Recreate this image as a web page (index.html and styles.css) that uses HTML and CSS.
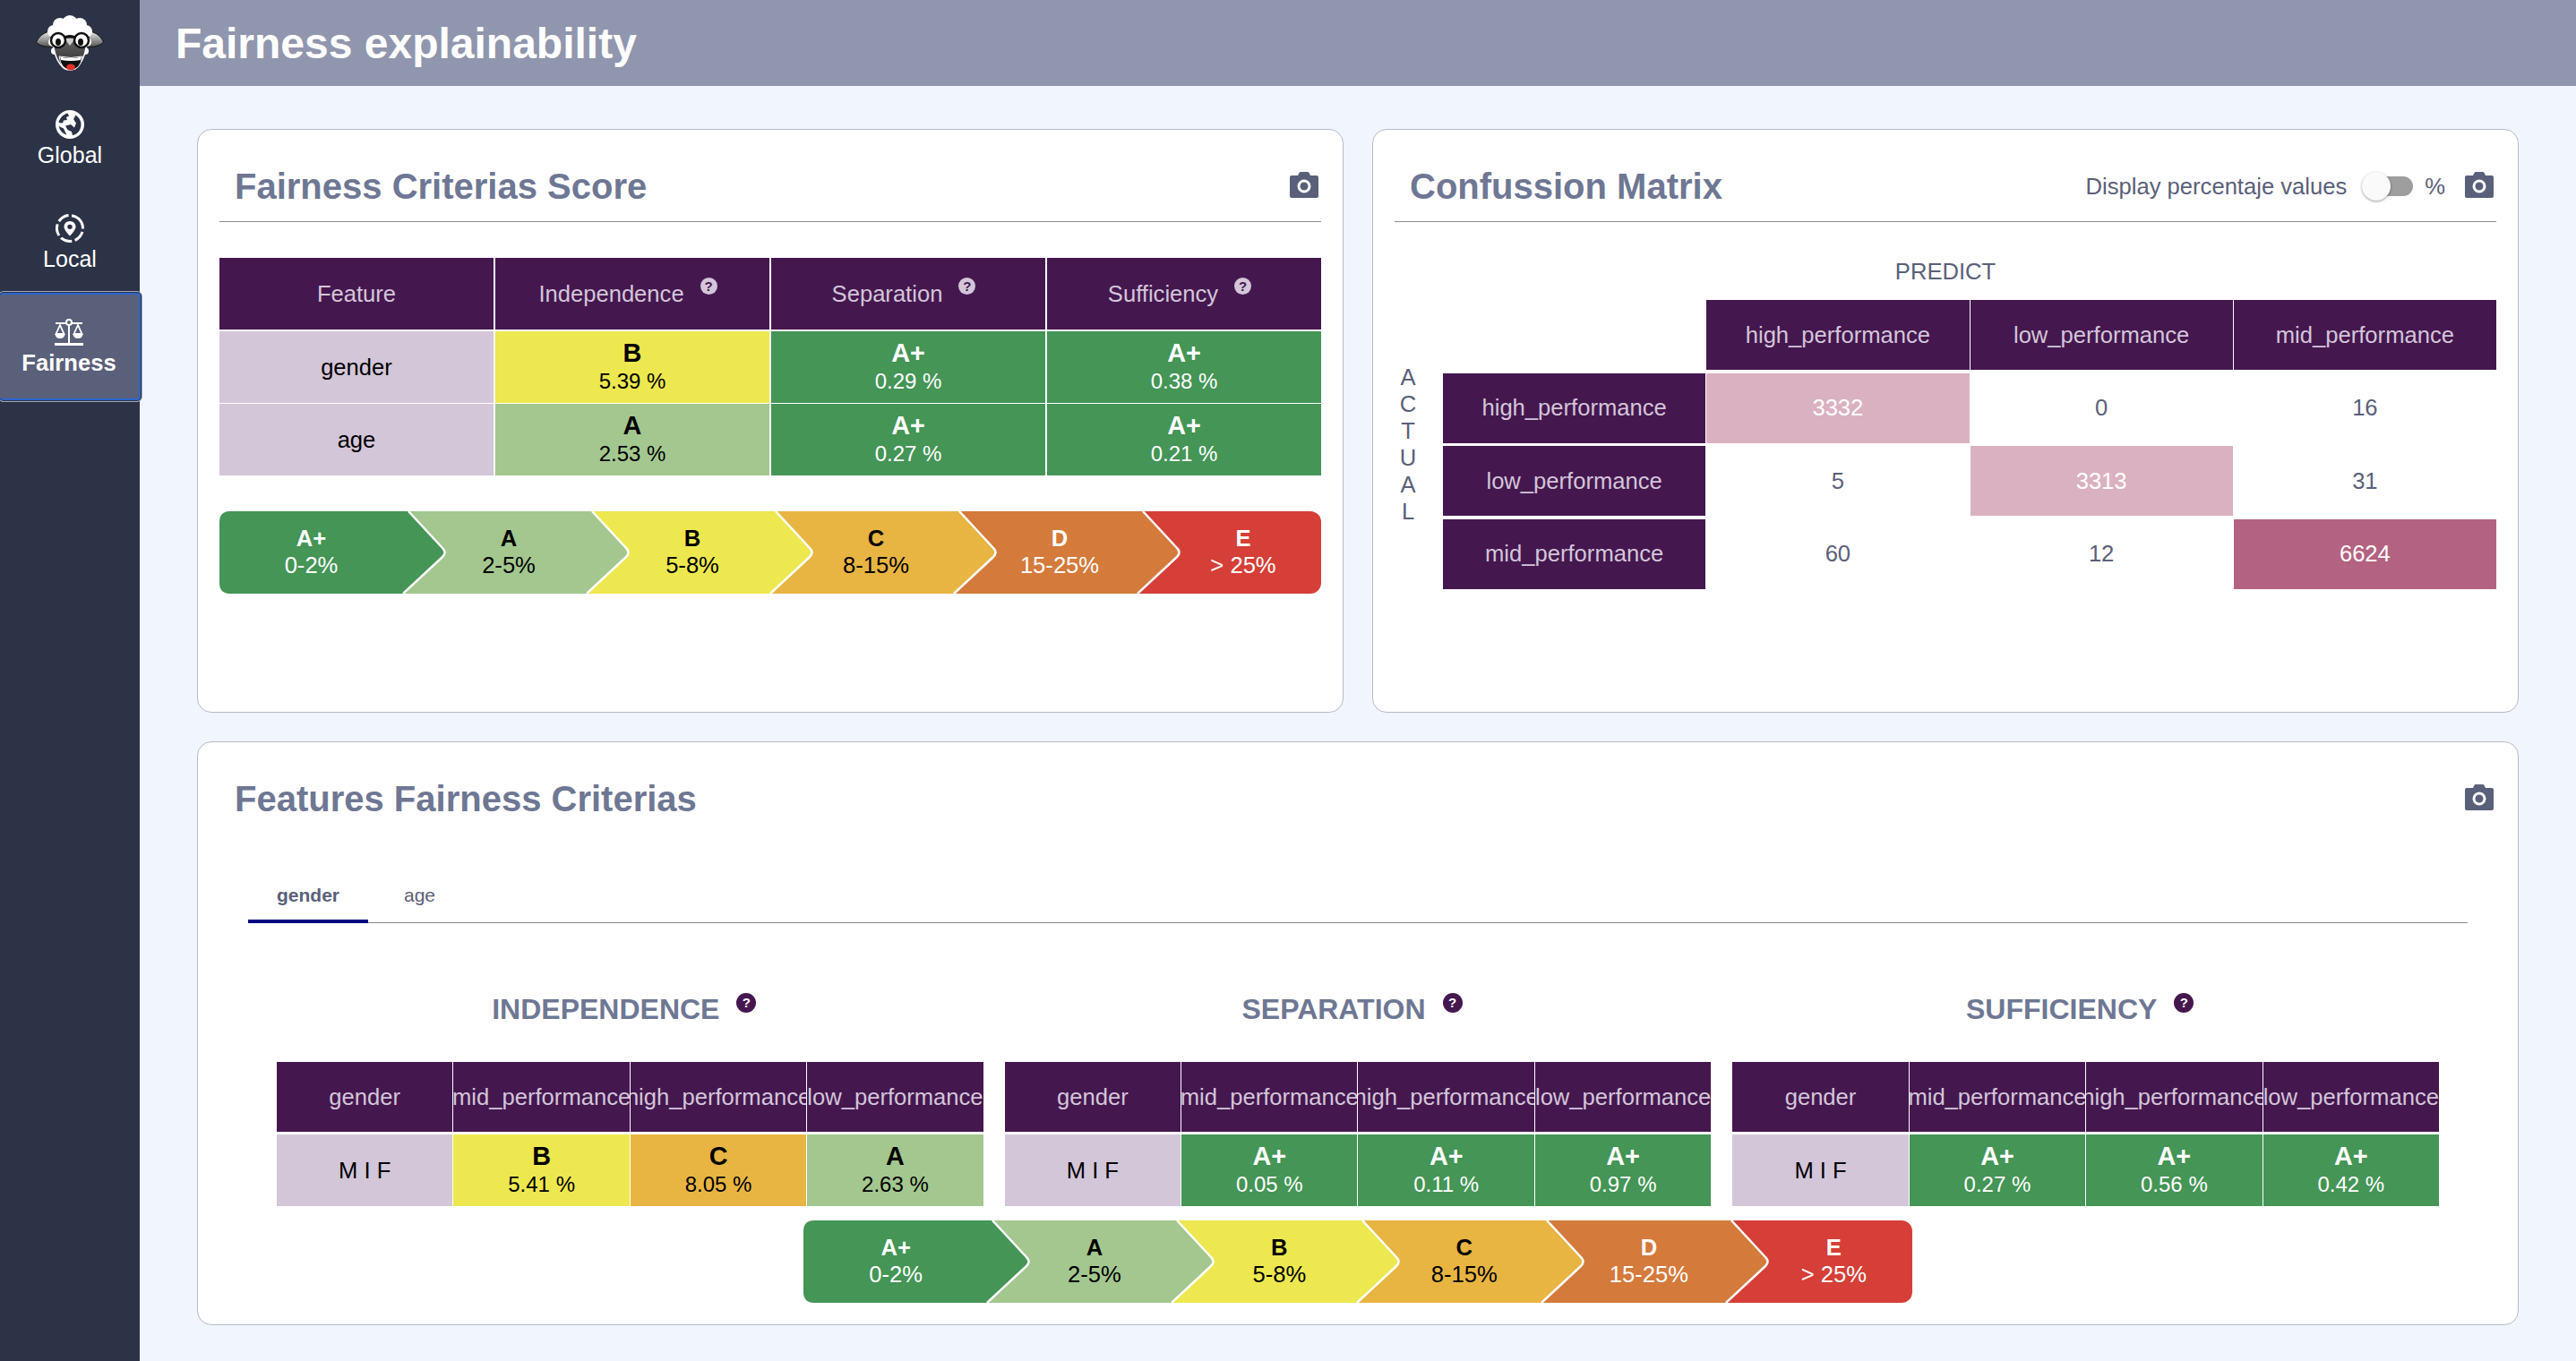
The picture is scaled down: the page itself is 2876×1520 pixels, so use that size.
FILE: index.html
```html
<!DOCTYPE html>
<html lang="en">
<head>
<meta charset="utf-8">
<title>Fairness explainability</title>
<link rel="stylesheet" href="styles.css">
</head>
<body>
<svg class="defs" width="0" height="0" aria-hidden="true">
  <defs>
    <symbol id="chev-first" viewBox="0 0 260 92">
      <path fill="currentColor" d="M12 0H211L249 41Q254 46 249 51L205 92H12Q0 92 0 80V12Q0 0 12 0Z"/>
      <path fill="none" stroke="#fff" stroke-width="2.5" d="M211 0L249 41Q254 46 249 51L205 92"/>
    </symbol>
    <symbol id="chev" viewBox="0 0 260 92">
      <path fill="currentColor" d="M0 0H211L249 41Q254 46 249 51L205 92H0Z"/>
      <path fill="none" stroke="#fff" stroke-width="2.5" d="M211 0L249 41Q254 46 249 51L205 92"/>
    </symbol>
    <symbol id="camera" viewBox="0 0 32 29">
      <path fill="currentColor" d="M2 4H9L10.500 1Q11 0 12 0H20Q21 0 21.500 1L23 4H30Q32 4 32 6V27Q32 29 30 29H2Q0 29 0 27V6Q0 4 2 4Z"/>
      <circle cx="16" cy="16" r="6" fill="none" stroke="#fff" stroke-width="3"/>
    </symbol>
  </defs>
</svg>

<aside class="sidebar">
  <div class="logo">
    <svg width="76" height="62" viewBox="0 0 76 62" aria-label="logo">
      <defs>
        <linearGradient id="ear" x1="0" y1="0" x2="0" y2="1">
          <stop offset="0" stop-color="#e8e8e8"/><stop offset="1" stop-color="#555"/>
        </linearGradient>
        <linearGradient id="face" x1="0" y1="0" x2="0" y2="1">
          <stop offset="0" stop-color="#666"/><stop offset="1" stop-color="#2f2f2f"/>
        </linearGradient>
      </defs>
      <path fill="url(#ear)" stroke="#111" stroke-width="1" d="M16 18C9 19 3 24 .5 30C4 34 11 36 18 35Z"/>
      <path fill="url(#ear)" stroke="#111" stroke-width="1" d="M60 18C67 19 73 24 75.500 30C72 34 65 36 58 35Z"/>
      <g fill="#fff">
        <circle cx="38" cy="9" r="9"/><circle cx="27" cy="11" r="8"/><circle cx="49" cy="11" r="8"/>
        <circle cx="20" cy="18" r="7"/><circle cx="56" cy="18" r="7"/><circle cx="38" cy="22" r="19"/>
        <circle cx="19" cy="30" r="5"/><circle cx="57" cy="30" r="5"/><circle cx="21" cy="40" r="4"/><circle cx="55" cy="40" r="4"/>
      </g>
      <path fill="url(#face)" stroke="#fff" stroke-width="1.500" d="M20 22H56C58 36 54 50 46 58C42 62 34 62 30 58C22 50 18 36 20 22Z"/>
      <path fill="#cfcfcf" d="M32 26H44L38 34Z"/>
      <path fill="none" stroke="#111" stroke-width="3" d="M32 25Q38 22 44 25"/>
      <circle cx="25" cy="28" r="8" fill="#fff" stroke="#111" stroke-width="2.500"/>
      <circle cx="51" cy="28" r="8" fill="#fff" stroke="#111" stroke-width="2.500"/>
      <ellipse cx="25" cy="30" rx="3" ry="4" fill="#111"/>
      <ellipse cx="50" cy="30" rx="3" ry="4" fill="#111"/>
      <path fill="#111" stroke="#fff" stroke-width="1" d="M26 46Q39 49 52 46Q50 61 39 61Q28 61 26 46Z"/>
      <path fill="#fff" d="M27 46.500Q39 49.500 51 46.500L50 50Q39 52 28 50Z"/>
      <ellipse cx="39" cy="58" rx="5" ry="3.500" fill="#e2302a"/>
    </svg>
  </div>
  <nav class="nav">
    <a class="nav-item">
      <svg class="nav-icon" width="32" height="32" viewBox="0 0 32 32">
        <circle cx="16" cy="16" r="16" fill="#fff"/>
        <path fill="#2c3347" d="M3.500 14C4.500 9 8.500 4.800 13.500 3.500L15 6.500L12 8L13 11L9 11.500L8 14.500Z"/>
        <path fill="#2c3347" d="M11 17.500L17 16L21 19.500L23 14.500L20 10L22.500 5.500C26.500 8 28.500 12 28.500 16C28.500 22 24.500 27 19 28.200L18 24L13.500 22Z"/>
        <path fill="#2c3347" d="M3.700 18L9 20.500L12.500 27.700C8 26.300 4.500 22.700 3.700 18Z"/>
      </svg>
      <span>Global</span>
    </a>
    <a class="nav-item">
      <svg class="nav-icon" width="32" height="32" viewBox="0 0 32 32">
        <circle cx="16" cy="16" r="14.500" fill="none" stroke="#fff" stroke-width="3" stroke-dasharray="13 3.500" transform="rotate(-50 16 16)"/>
        <path fill="#fff" fill-rule="evenodd" d="M16 8C12.300 8 9.500 10.800 9.500 14.300C9.500 17.500 14 22.500 16 24.500C18 22.500 22.500 17.500 22.500 14.300C22.500 10.800 19.700 8 16 8ZM16 11.700A2.700 2.700 0 1 1 16 17.100A2.700 2.700 0 1 1 16 11.700Z"/>
      </svg>
      <span>Local</span>
    </a>
    <a class="nav-item is-active">
      <svg class="nav-icon" width="32" height="30" viewBox="0 0 32 30">
        <rect x="0" y="27" width="32" height="3" fill="#fff"/>
        <rect x="15" y="4" width="2" height="24" fill="#fff"/>
        <rect x="1" y="4" width="30" height="2" fill="#fff"/>
        <circle cx="16" cy="4" r="3" fill="#5a6079" stroke="#fff" stroke-width="2"/>
        <path fill="none" stroke="#fff" stroke-width="1.800" d="M6 7L1.500 17H10.500ZM26 7L21.500 17H30.500Z"/>
        <path fill="#fff" d="M.5 17H11.500Q11 22 6 22Q1 22 .5 17ZM20.500 17H31.500Q31 22 26 22Q21 22 20.500 17Z"/>
      </svg>
      <span>Fairness</span>
    </a>
  </nav>
</aside>

<div class="main">
  <header class="topbar"><h1>Fairness explainability</h1></header>
  <div class="content">

    <section class="card">
      <div class="card-head ruled">
        <h2>Fairness Criterias Score</h2>
        <svg class="camera" width="32" height="29"><use href="#camera"/></svg>
      </div>
      <div class="score-grid">
        <div class="cell head">Feature</div>
        <div class="cell head">Independence<span class="help">?</span></div>
        <div class="cell head">Separation<span class="help">?</span></div>
        <div class="cell head">Sufficiency<span class="help">?</span></div>
        <div class="cell feat">gender</div>
        <div class="cell g-b"><b>B</b><span>5.39 %</span></div>
        <div class="cell g-ap"><b>A+</b><span>0.29 %</span></div>
        <div class="cell g-ap"><b>A+</b><span>0.38 %</span></div>
        <div class="cell feat">age</div>
        <div class="cell g-a"><b>A</b><span>2.53 %</span></div>
        <div class="cell g-ap"><b>A+</b><span>0.27 %</span></div>
        <div class="cell g-ap"><b>A+</b><span>0.21 %</span></div>
      </div>
      <div class="legend">
        <div class="seg g-ap"><svg class="chev"><use href="#chev-first"/></svg><div class="seg-label"><b>A+</b><span>0-2%</span></div></div>
        <div class="seg g-a"><svg class="chev"><use href="#chev"/></svg><div class="seg-label"><b>A</b><span>2-5%</span></div></div>
        <div class="seg g-b"><svg class="chev"><use href="#chev"/></svg><div class="seg-label"><b>B</b><span>5-8%</span></div></div>
        <div class="seg g-c"><svg class="chev"><use href="#chev"/></svg><div class="seg-label"><b>C</b><span>8-15%</span></div></div>
        <div class="seg g-d"><svg class="chev"><use href="#chev"/></svg><div class="seg-label"><b>D</b><span>15-25%</span></div></div>
        <div class="seg seg-last g-e"><div class="seg-label"><b>E</b><span>&gt; 25%</span></div></div>
      </div>
    </section>

    <section class="card">
      <div class="card-head ruled">
        <h2>Confussion Matrix</h2>
        <div class="head-tools">
          <span>Display percentaje values</span>
          <span class="toggle"><span class="toggle-thumb"></span></span>
          <span class="toggle-unit">%</span>
          <svg class="camera" width="32" height="29"><use href="#camera"/></svg>
        </div>
      </div>
      <div class="predict">PREDICT</div>
      <div class="matrix-wrap">
        <div class="actual">ACTUAL</div>
        <div class="matrix">
          <div class="blank"></div>
          <div class="cell head">high_performance</div>
          <div class="cell head">low_performance</div>
          <div class="cell head">mid_performance</div>
          <div class="cell head">high_performance</div>
          <div class="cell m-mid">3332</div>
          <div class="cell m-none">0</div>
          <div class="cell m-none">16</div>
          <div class="cell head">low_performance</div>
          <div class="cell m-none">5</div>
          <div class="cell m-mid">3313</div>
          <div class="cell m-none">31</div>
          <div class="cell head">mid_performance</div>
          <div class="cell m-none">60</div>
          <div class="cell m-none">12</div>
          <div class="cell m-high">6624</div>
        </div>
      </div>
    </section>

    <section class="card card-wide">
      <div class="card-head">
        <h2>Features Fairness Criterias</h2>
        <svg class="camera" width="32" height="29"><use href="#camera"/></svg>
      </div>
      <div class="tabs">
        <span class="tab is-active">gender</span>
        <span class="tab">age</span>
      </div>
      <div class="criteria">
        <div class="criterion">
          <h3>INDEPENDENCE<span class="help help-dark">?</span></h3>
          <div class="crit-grid">
            <div class="cell head">gender</div>
            <div class="cell head">mid_performance</div>
            <div class="cell head">high_performance</div>
            <div class="cell head">low_performance</div>
            <div class="cell feat">M I F</div>
            <div class="cell g-b"><b>B</b><span>5.41 %</span></div>
            <div class="cell g-c"><b>C</b><span>8.05 %</span></div>
            <div class="cell g-a"><b>A</b><span>2.63 %</span></div>
          </div>
        </div>
        <div class="criterion">
          <h3>SEPARATION<span class="help help-dark">?</span></h3>
          <div class="crit-grid">
            <div class="cell head">gender</div>
            <div class="cell head">mid_performance</div>
            <div class="cell head">high_performance</div>
            <div class="cell head">low_performance</div>
            <div class="cell feat">M I F</div>
            <div class="cell g-ap"><b>A+</b><span>0.05 %</span></div>
            <div class="cell g-ap"><b>A+</b><span>0.11 %</span></div>
            <div class="cell g-ap"><b>A+</b><span>0.97 %</span></div>
          </div>
        </div>
        <div class="criterion">
          <h3>SUFFICIENCY<span class="help help-dark">?</span></h3>
          <div class="crit-grid">
            <div class="cell head">gender</div>
            <div class="cell head">mid_performance</div>
            <div class="cell head">high_performance</div>
            <div class="cell head">low_performance</div>
            <div class="cell feat">M I F</div>
            <div class="cell g-ap"><b>A+</b><span>0.27 %</span></div>
            <div class="cell g-ap"><b>A+</b><span>0.56 %</span></div>
            <div class="cell g-ap"><b>A+</b><span>0.42 %</span></div>
          </div>
        </div>
      </div>
      <div class="legend legend-wide">
        <div class="seg g-ap"><svg class="chev"><use href="#chev-first"/></svg><div class="seg-label"><b>A+</b><span>0-2%</span></div></div>
        <div class="seg g-a"><svg class="chev"><use href="#chev"/></svg><div class="seg-label"><b>A</b><span>2-5%</span></div></div>
        <div class="seg g-b"><svg class="chev"><use href="#chev"/></svg><div class="seg-label"><b>B</b><span>5-8%</span></div></div>
        <div class="seg g-c"><svg class="chev"><use href="#chev"/></svg><div class="seg-label"><b>C</b><span>8-15%</span></div></div>
        <div class="seg g-d"><svg class="chev"><use href="#chev"/></svg><div class="seg-label"><b>D</b><span>15-25%</span></div></div>
        <div class="seg seg-last g-e"><div class="seg-label"><b>E</b><span>&gt; 25%</span></div></div>
      </div>
    </section>

  </div>
</div>
</body>
</html>
```

FILE: styles.css
```css
* { box-sizing: border-box; }

html, body { height: 100%; }

body {
  margin: 0;
  display: flex;
  min-height: 1520px;
  overflow: hidden;
  background: #f1f5fe;
  color: #5a6079;
  font-family: "Liberation Sans", Arial, sans-serif;
  font-size: 25.6px;
}

.defs { position: absolute; }

/* sidebar */
.sidebar {
  flex: 0 0 156px;
  width: 156px;
  min-width: 0;
  background: #2c3347;
  position: relative;
  z-index: 2;
}

.logo {
  height: 96px;
  padding-top: 17px;
  display: flex;
  justify-content: center;
}

.nav { display: flex; flex-direction: column; align-items: flex-start; padding-top: 27px; }

.nav-item {
  width: 156px;
  height: 102px;
  display: flex;
  flex-direction: column;
  align-items: center;
  color: #fff;
  font-size: 25px;
  line-height: 30px;
  margin-bottom: 14px;
}

.nav-icon { flex: none; margin-bottom: 3px; }

.nav-item.is-active {
  width: 157px;
  height: 120px;
  margin-top: -28px;
  padding: 27px 1px 0 0;
  background: #5a6079;
  border: 2px solid #2a65d0;
  border-left: 0;
  border-radius: 4px;
  box-shadow: 0 0 0 1px #2c3347, 0 0 0 2px #a4a8b6;
  font-weight: 700;
  font-size: 25.6px;
}

.nav-item.is-active .nav-icon { margin-bottom: 4px; }

/* main */
.main { flex: 1; min-width: 0; display: flex; flex-direction: column; }

.topbar {
  height: 96px;
  flex: none;
  background: #9096ad;
  display: flex;
  align-items: center;
  padding-left: 40px;
}

.topbar h1 { margin: 0; color: #fff; font-size: 48px; font-weight: 700; }

.content {
  padding: 48px 64px 0;
  display: grid;
  grid-template-columns: 1fr 1fr;
  grid-template-rows: 652px 652px;
  gap: 32px;
}

.card {
  background: #fff;
  border: 1px solid #b5bac6;
  border-radius: 16px;
  padding: 24px;
  min-width: 0;
}

.card-wide { grid-column: 1 / -1; }

.card-head {
  height: 78px;
  display: flex;
  align-items: center;
  justify-content: space-between;
  padding: 0 3px 0 17px;
}

.card-head.ruled { height: 79px; border-bottom: 1px solid #8e8e8e; }

.card-head h2 {
  margin: 0;
  font-size: 40px;
  font-weight: 700;
  color: #6e7793;
}

.camera { flex: none; margin-bottom: 4px; color: #5a6079; }

.head-tools { display: flex; align-items: center; }

/* toggle */
.toggle {
  position: relative;
  width: 50px;
  height: 22px;
  margin: 0 13px 0 24px;
  background: #9e9e9e;
  border-radius: 11px;
}

.toggle-thumb {
  position: absolute;
  left: -7px;
  top: -5px;
  width: 32px;
  height: 32px;
  border-radius: 50%;
  background: #fafafa;
  box-shadow: 0 1px 3px rgba(0, 0, 0, .4);
}

.toggle-unit { margin-right: 22px; }

/* table cells */
.cell {
  display: flex;
  flex-direction: column;
  align-items: center;
  justify-content: center;
  overflow: hidden;
  white-space: nowrap;
  line-height: 31px;
  text-align: center;
  color: #000;
}

.cell b { font-size: 28.8px; }
.cell span { font-size: 24px; }

.cell.head {
  flex-direction: row;
  background: #45174f;
  color: #d3c6d9;
}

.cell.feat { background: #d3c6d9; }

.g-ap { background: #449556; }
.g-a { background: #a3c78f; }
.g-b { background: #ede84f; }
.g-c { background: #e8b542; }
.g-d { background: #d47a3b; }
.g-e { background: #d53f37; }

.cell.g-ap, .seg.g-ap, .seg.g-d, .seg.g-e { color: #fff; }

.help {
  flex: none;
  width: 19px;
  height: 19px;
  margin: -18px 10px 0 18px;
  border-radius: 50%;
  background: #d3c6d9;
  color: #45174f;
  font-size: 15px !important;
  font-weight: 700;
  line-height: 19px;
  text-align: center;
}

.help-dark {
  display: inline-block;
  vertical-align: top;
  width: 22px;
  height: 22px;
  margin: 0 0 0 19px;
  background: #45174f;
  color: #fff;
  line-height: 22px;
}

.score-grid {
  margin-top: 40px;
  display: grid;
  grid-template-columns: repeat(4, 1fr);
  grid-template-rows: 81px 80px 80px;
  column-gap: 2px;
  row-gap: 1px;
}

.score-grid .head { margin-bottom: 1px; }

/* legend */
.legend { margin-top: 40px; height: 92px; display: flex; }

.seg {
  position: relative;
  flex: 1 1 0;
  min-width: 0;
  height: 92px;
  color: #000;
  background: none;
}

.seg:nth-child(1) { z-index: 6; }
.seg:nth-child(2) { z-index: 5; }
.seg:nth-child(3) { z-index: 4; }
.seg:nth-child(4) { z-index: 3; }
.seg:nth-child(5) { z-index: 2; }
.seg:nth-child(6) { z-index: 1; }

.chev {
  position: absolute;
  left: 0;
  top: 0;
  width: 260px;
  height: 92px;
}

.seg.g-ap .chev { color: #449556; }
.seg.g-a .chev { color: #a3c78f; }
.seg.g-b .chev { color: #ede84f; }
.seg.g-c .chev { color: #e8b542; }
.seg.g-d .chev { color: #d47a3b; }

.seg-last { background: #d53f37; border-radius: 0 12px 12px 0; }

.seg-label {
  position: relative;
  height: 92px;
  display: flex;
  flex-direction: column;
  align-items: center;
  justify-content: center;
  line-height: 30px;
  padding-bottom: 2px;
  white-space: nowrap;
}

.seg:not(:first-child) .seg-label { margin-left: 31px; }

/* matrix */
.predict {
  margin-top: 40px;
  height: 47px;
  text-align: center;
  line-height: 30px;
}

.matrix-wrap { display: flex; align-items: center; }

.actual {
  width: 20px;
  margin: 0 29px 0 5px;
  line-height: 30px;
  text-align: center;
  word-break: break-all;
}

.matrix {
  flex: 1;
  min-width: 0;
  display: grid;
  grid-template-columns: repeat(4, 1fr);
  grid-auto-rows: 78px;
  column-gap: 1px;
  row-gap: 3.67px;
}

.m-none { background: #fff; color: #5a6079; }
.m-mid { background: #dab1c0; color: #fff; }
.m-high { background: #b46281; color: #fff; }

/* tabs */
.tabs {
  margin: 47px 32px 0;
  height: 53px;
  display: flex;
  border-bottom: 1px solid #888;
  font-size: 21px;
  line-height: 44px;
}

.tab { padding: 0 32px; height: 53px; }

.tab + .tab { padding: 0 0 0 40px; }

.tab.is-active { font-weight: 700; border-bottom: 4px solid #000080; }

/* criteria */
.criteria {
  margin: 72px 64px 0;
  display: grid;
  grid-template-columns: repeat(3, 1fr);
  gap: 24px;
}

.criterion h3 {
  margin: 0 13px 23px 0;
  height: 60px;
  padding-top: 6px;
  text-align: center;
  font-size: 32px;
  line-height: 37px;
  font-weight: 700;
  color: #6e7793;
}

.crit-grid {
  display: grid;
  grid-template-columns: repeat(4, 1fr);
  grid-template-rows: 81px 80px;
  column-gap: 1px;
}

.crit-grid .head { margin-bottom: 3px; }

.legend-wide { margin: 16px auto 0; width: 1238px; }
```
